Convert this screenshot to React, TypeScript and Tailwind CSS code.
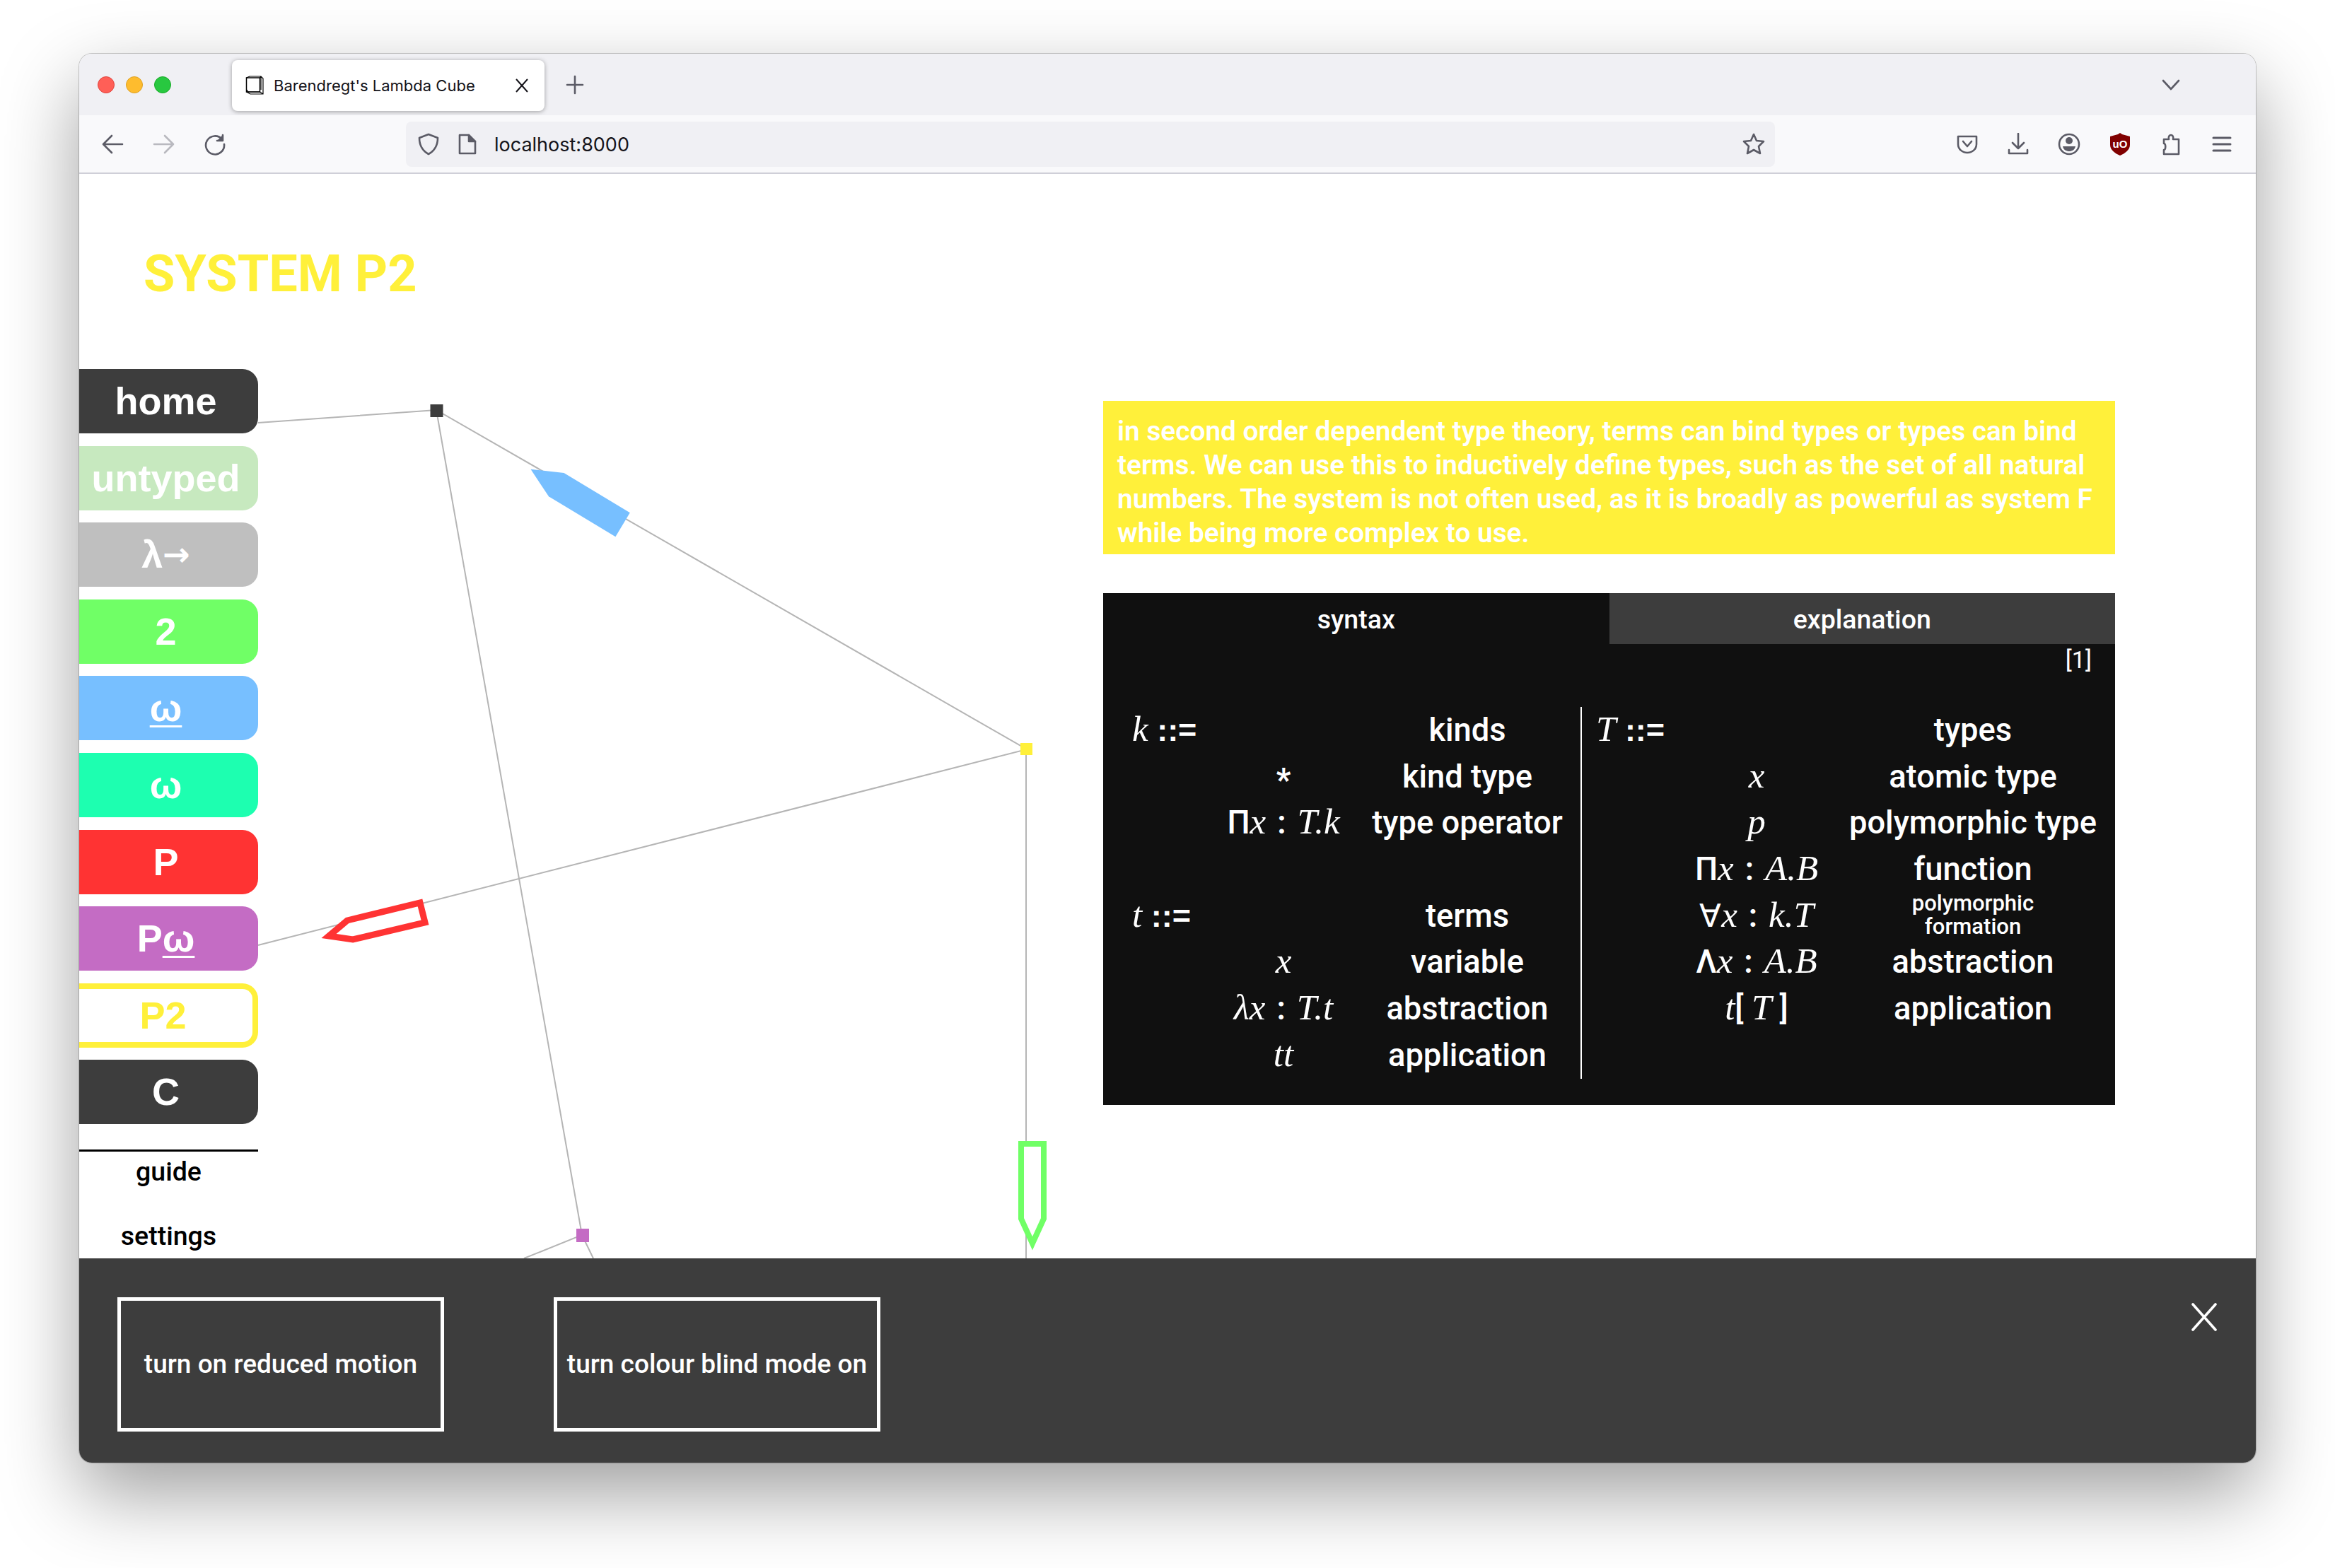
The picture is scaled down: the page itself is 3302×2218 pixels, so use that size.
import type { ReactNode } from 'react'

const navItems = [
	{ label: <>home</>, bg: 'bg-[#3d3d3d] text-white' },
	{ label: <>untyped</>, bg: 'bg-[#c7e9bf] text-white' },
	{ label: <>λ<span className="font-['DejaVu_Sans',sans-serif] text-[46px]">→</span></>, bg: 'bg-[#bfbfbf] text-white' },
	{ label: <>2</>, bg: 'bg-[#70ff66] text-white' },
	{ label: <span className="underline decoration-[3px] underline-offset-[6px]">ω</span>, bg: 'bg-[#77bfff] text-white' },
	{ label: <>ω</>, bg: 'bg-[#1dffb0] text-white' },
	{ label: <>P</>, bg: 'bg-[#ff3333] text-white' },
	{ label: <>P<span className="underline decoration-[3px] underline-offset-[6px]">ω</span></>, bg: 'bg-[#c46cc4] text-white' },
	{ label: <>P2</>, bg: 'bg-white text-[#fff03a] border-y-[8px] border-r-[8px] border-[#fff03a]' },
	{ label: <>C</>, bg: 'bg-[#3d3d3d] text-white' },
]

function I({ children }: { children: ReactNode }) {
	return <i className="font-['Liberation_Serif',serif] italic font-normal text-[51px] leading-none">{children}</i>
}

function Bnf() {
	return <span className="font-['Liberation_Sans',sans-serif] font-bold text-[45px]"> ::=</span>
}

function Colon() {
	return <span className="mx-[16px] font-semibold">:</span>
}

const leftRows: [ReactNode, ReactNode, ReactNode][] = [
	[<><I>k</I><Bnf /></>, '', 'kinds'],
	['', <span className="block pt-[10px] font-bold">*</span>, 'kind type'],
	['', <>Π<I>x</I><Colon /><I>T.k</I></>, 'type operator'],
	['', '', ''],
	[<><I>t</I><Bnf /></>, '', 'terms'],
	['', <I>x</I>, 'variable'],
	['', <><I>λx</I><Colon /><I>T.t</I></>, 'abstraction'],
	['', <I>tt</I>, 'application'],
]

const rightRows: [ReactNode, ReactNode, ReactNode][] = [
	[<><I>T</I><Bnf /></>, '', 'types'],
	['', <I>x</I>, 'atomic type'],
	['', <I>p</I>, 'polymorphic type'],
	['', <>Π<I>x</I><Colon /><I>A.B</I></>, 'function'],
	['', <>∀<I>x</I><Colon /><I>k.T</I></>, <span className="block -mt-[3px] text-[31px] leading-[33px]">polymorphic<br />formation</span>],
	['', <>Λ<I>x</I><Colon /><I>A.B</I></>, 'abstraction'],
	['', <><I>t</I>[ <I>T</I> ]</>, 'application'],
]

function Cube() {
	return (
		<svg width="26" height="27" viewBox="0 0 26 27" fill="none" stroke="#000" strokeWidth="1.5">
			<rect x="1.5" y="3" width="19" height="20" />
			<path d="M1.5 3 6 1H22L25 4V26H7L1.5 23M20.5 3 22 1M20.5 23 25 26M22 1V20M1.5 20 4 23H20.5" strokeWidth="1.2" />
		</svg>
	)
}

const stroke = { fill: 'none', stroke: '#5b5b66', strokeWidth: 2.6, strokeLinecap: 'round' as const, strokeLinejoin: 'round' as const }

function Ico({ children, dim }: { children: ReactNode; dim?: boolean }) {
	return <svg width="32" height="32" viewBox="0 0 32 32" className={dim ? 'shrink-0 opacity-40' : 'shrink-0'} {...stroke}>{children}</svg>
}

export default function App() {
	return (
		<div className="w-[3302px] h-[2218px] bg-white pt-[76px] pl-[112px] font-['Roboto',sans-serif] overflow-hidden">
			<div className="w-[3078px] h-[1993px] flex flex-col rounded-[18px] overflow-hidden shadow-[0_44px_110px_rgba(0,0,0,0.38),0_0_0_1px_rgba(0,0,0,0.2)]">
				{/* title bar */}
				<div className="h-[87px] shrink-0 bg-[#f0f0f4] flex items-center pl-[26px]">
					<div className="flex gap-[16px]">
						<div className="w-[24px] h-[24px] rounded-full bg-[#ff5f57] border border-[#e0443e]" />
						<div className="w-[24px] h-[24px] rounded-full bg-[#febc2e] border border-[#dea123]" />
						<div className="w-[24px] h-[24px] rounded-full bg-[#28c840] border border-[#1aab29]" />
					</div>
					<div className="ml-[86px] mt-[2px] w-[442px] h-[72px] bg-white rounded-[8px] shadow-[0_1px_6px_rgba(0,0,0,0.35)] flex items-center pl-[19px] pr-[22px]">
						<Cube />
						<span className="ml-[14px] mt-[2px] text-[22px] font-['Inter',sans-serif] text-[#15141a] whitespace-nowrap">Barendregt's Lambda Cube</span>
						<svg width="20" height="24" viewBox="0 0 20 24" className="ml-auto" fill="none" stroke="#15141a" strokeWidth="2"><path d="M2 3 18 21M18 3 2 21" /></svg>
					</div>
					<div className="ml-[27px]">
						<Ico><path d="M16 4V28M5 16H27" /></Ico>
					</div>
					<div className="ml-auto mr-[104px]">
						<Ico><path d="M5 10 16 22 27 10" /></Ico>
					</div>
				</div>
				{/* toolbar */}
				<div className="h-[83px] shrink-0 bg-[#f9f9fb] border-b-[2px] border-[#cfcfd8] flex items-center pl-[31px]">
					<Ico><path d="M3 16H30M15 4 3 16 15 28" /></Ico>
					<div className="ml-[41px]"><Ico dim><path d="M2 16H29M17 4 29 16 17 28" /></Ico></div>
					<div className="ml-[40px]"><Ico><path d="M26 9A13 13 0 1 0 29 16" /><path d="M27 3V11H19" fill="#5b5b66" /></Ico></div>
					<div className="ml-[254px] w-[1936px] h-[64px] rounded-[8px] bg-[#f0f0f4] flex items-center pl-[16px] pr-[14px]">
						<Ico><path d="M16 2 29 7C29 17 25 25 16 30 7 25 3 17 3 7Z" /></Ico>
						<div className="ml-[23px]"><Ico><path d="M5 3H18L27 12V29H5Z" /><path d="M18 3V12H27" fill="#5b5b66" /></Ico></div>
						<span className="ml-[22px] mt-[3px] text-[27px] font-['Inter',sans-serif] text-[#15141a]">localhost:8000</span>
						<div className="ml-auto"><Ico><path d="M16 2 20 11 30 12 23 19 25 29 16 24 7 29 9 19 2 12 12 11Z" /></Ico></div>
					</div>
					<div className="ml-[256px] flex gap-[40px]">
						<Ico><path d="M3 5H29V16C29 23 23 28 16 28 9 28 3 23 3 16Z" /><path d="M10 12 16 19 22 12" /></Ico>
						<Ico><path d="M16 1V22M8 14 16 22 24 14M3 24V29H29V24" /></Ico>
						<Ico><circle cx="16" cy="16" r="14" /><circle cx="16" cy="11" r="5" fill="#5b5b66" stroke="none" /><path d="M7 19H25C24 24 20 26 16 26 12 26 8 24 7 19Z" fill="#5b5b66" stroke="none" /></Ico>
						<svg width="32" height="32" viewBox="0 0 32 32" className="shrink-0">
							<path d="M16 0 19 2 30 5V17C30 24 23 29 16 32 9 29 2 24 2 17V5L13 2Z" fill="#800000" />
							<text x="16" y="21" textAnchor="middle" fontSize="15" fontWeight="700" fill="#fff" fontFamily="Liberation Sans">uO</text>
						</svg>
						<Ico><path d="M6 30V24C9 24 9 15 6 15V9H13C11 1 21 1 19 9H27V30Z" /></Ico>
						<Ico><path d="M4 7H28M4 16H28M4 25H28" strokeWidth="3" /></Ico>
					</div>
				</div>
				{/* page */}
				<div className="relative flex-1 bg-white overflow-hidden">
					<svg width="3078" height="1534" viewBox="112 246 3078 1534" className="absolute left-0 top-0">
						<g stroke="#b5b5b5" strokeWidth="2" fill="none">
							<path d="M365 598 617 580 1452 1060 365 1337" />
							<path d="M617 580 823 1747 741 1780" />
							<path d="M823 1747 839 1780" />
							<path d="M1451 1060V1780" />
						</g>
						<rect x="608.5" y="572" width="18" height="18" fill="#3d3d3d" />
						<rect x="815" y="1738" width="18" height="19" fill="#c46cc4" />
						<rect x="1443" y="1051" width="17" height="17" fill="#fff03a" />
						<polygon points="750.5,663.8 797.5,669 890.8,725.3 870.4,759.2 776,702.3" fill="#77bfff" />
						<polygon points="465,1324 491,1302 594,1277 601,1305 499,1329" fill="#fff" stroke="#ff3333" strokeWidth="9" />
						<polygon points="1444,1618 1476,1618 1476,1724 1460,1759 1444,1724" fill="#fff" stroke="#70ff66" strokeWidth="8" />
					</svg>
					<div className="relative h-[276px] pl-[91px] pt-[98px]">
						<h1 className="text-[72px] leading-[88px] font-bold text-[#fff03a]">SYSTEM P2</h1>
					</div>
					<div className="relative flex items-start">
						<nav className="w-[253px] shrink-0 flex flex-col gap-[17.6px] font-['Liberation_Sans',sans-serif] font-bold text-[54px]">
							{navItems.map((n, i) => (
								<div key={i} className={`h-[91px] rounded-r-[22px] flex items-center justify-center pr-[8px] ${n.bg}`}>{n.label}</div>
							))}
							<div className="mt-[18px] border-t-[3px] border-black font-['Roboto',sans-serif] font-medium text-[37.5px] text-black text-center">
								<div className="pt-[6px] leading-[44px]">guide</div>
								<div className="pt-[47px] leading-[44px]">settings</div>
							</div>
						</nav>
						<section className="ml-[1195px] mt-[45px] w-[1431px] shrink-0">
							<p className="h-[217px] bg-[#fff03a] pl-[20px] pt-[19px] text-[38.8px] leading-[48px] font-semibold text-white whitespace-nowrap">
								in second order dependent type theory, terms can bind types or types can bind<br />
								terms. We can use this to inductively define types, such as the set of all natural<br />
								numbers. The system is not often used, as it is broadly as powerful as system F<br />
								while being more complex to use.
							</p>
							<div className="mt-[55px] h-[724px] bg-[#101010] text-white">
								<div className="grid grid-cols-2 h-[72px] text-[37.5px] font-medium">
									<div className="flex items-center justify-center pt-[2px]">syntax</div>
									<div className="flex items-center justify-center pt-[2px] bg-[#3d3d3d]">explanation</div>
								</div>
								<div className="h-[89px] pr-[33px] text-right text-[34px] leading-[44px]">[1]</div>
								<div className="flex text-[45.3px] font-medium">
									<div className="w-[677px] pl-[41px] grid grid-cols-[114px_200px_320px] auto-rows-[65.7px] items-center text-center border-r-[2px] border-white">
										{leftRows.map((r, i) => (
											<div key={i} className="contents">
												<div className="text-left whitespace-nowrap">{r[0]}</div>
												<div className="whitespace-nowrap">{r[1]}</div>
												<div className="whitespace-nowrap">{r[2]}</div>
											</div>
										))}
									</div>
									<div className="pl-[20px] grid grid-cols-[127px_200px_406px] auto-rows-[65.7px] items-center text-center content-start">
										{rightRows.map((r, i) => (
											<div key={i} className="contents">
												<div className="text-left whitespace-nowrap">{r[0]}</div>
												<div className="whitespace-nowrap">{r[1]}</div>
												<div className="pl-[6px] whitespace-nowrap">{r[2]}</div>
											</div>
										))}
									</div>
								</div>
							</div>
						</section>
					</div>
				</div>
				{/* settings bar */}
				<div className="h-[289px] shrink-0 bg-[#3d3d3d] flex pl-[54px] pt-[55px] text-white">
					<button className="w-[462px] h-[190px] border-[5px] border-white text-[37px] font-medium">turn on reduced motion</button>
					<button className="ml-[155px] w-[462px] h-[190px] border-[5px] border-white text-[37px] font-medium whitespace-nowrap">turn colour blind mode on</button>
					<svg width="36" height="40" viewBox="0 0 36 40" className="ml-auto mr-[55px] mt-[8px]" fill="none" stroke="#fff" strokeWidth="3.6" strokeLinecap="round"><path d="M2 2 34 38M34 2 2 38" /></svg>
				</div>
			</div>
		</div>
	)
}
